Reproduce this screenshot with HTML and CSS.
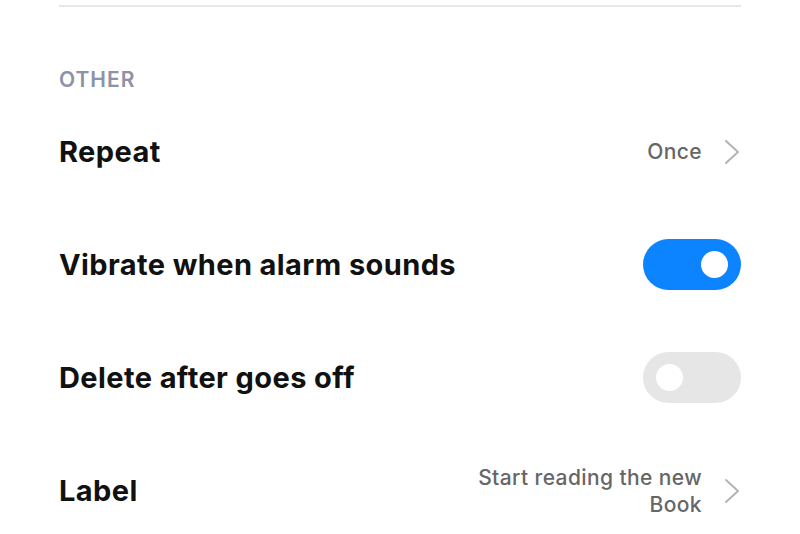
FILE: index.html
```html
<!DOCTYPE html>
<html>
    <head>
        <meta charset="utf-8" />
        <title>Alarm settings</title>
        <link rel="stylesheet" href="styles.css">
    </head>
    <body>
        <div class="page">
            <div class="divider"></div>
            <div class="section-title">OTHER</div>

            <div class="row">
                <span class="row-title">Repeat</span>
                <div class="row-right">
                    <span class="value">Once</span>
                    <svg class="chevron" width="18" height="26" viewBox="0 0 18 26">
                        <path d="M3 2 L15 13 L3 24" fill="none" stroke="#b3b3b3" stroke-width="2" stroke-linecap="round" stroke-linejoin="round" />
                    </svg>
                </div>
            </div>

            <div class="row">
                <span class="row-title">Vibrate when alarm sounds</span>
                <div class="switch on"><span class="knob"></span></div>
            </div>

            <div class="row">
                <span class="row-title">Delete after goes off</span>
                <div class="switch"><span class="knob"></span></div>
            </div>

            <div class="row">
                <span class="row-title">Label</span>
                <div class="row-right">
                    <span class="value">Start reading the new<br>Book</span>
                    <svg class="chevron" width="18" height="26" viewBox="0 0 18 26">
                        <path d="M3 2 L15 13 L3 24" fill="none" stroke="#b3b3b3" stroke-width="2" stroke-linecap="round" stroke-linejoin="round" />
                    </svg>
                </div>
            </div>
        </div>
    </body>
</html>
```

FILE: styles.css
```css
* {
    margin: 0;
    padding: 0;
    box-sizing: border-box;
}

body {
    background: #fff;
    font-family: Inter, "Noto Sans", sans-serif;
}

.page {
    padding: 0 59px;
    overflow: hidden;
    height: 534px;
}

.divider {
    margin-top: 5px;
    height: 2px;
    background: #e8e8e8;
}

.section-title {
    padding-top: 60px;
    padding-bottom: 2px;
    line-height: 26px;
    font-size: 21px;
    font-weight: 600;
    color: #8d93a6;
    letter-spacing: 1px;
}

.row {
    height: 113px;
    display: flex;
    align-items: center;
    justify-content: space-between;
}

.row-title {
    font-size: 29px;
    font-weight: 700;
    color: #111;
    letter-spacing: 0.4px;
}

.row-right {
    display: flex;
    align-items: center;
    gap: 21px;
}

.value {
    font-size: 21px;
    font-weight: 500;
    color: #666;
    text-align: right;
    line-height: 27px;
    letter-spacing: 0.4px;
}

.chevron {
    display: block;
}

.switch {
    width: 98px;
    height: 51px;
    border-radius: 26px;
    background: #e6e6e6;
    display: flex;
    align-items: center;
    padding: 0 13px;
}

.switch.on {
    background: #0d84ff;
    justify-content: flex-end;
}

.knob {
    width: 27px;
    height: 27px;
    border-radius: 50%;
    background: #fff;
}
```
